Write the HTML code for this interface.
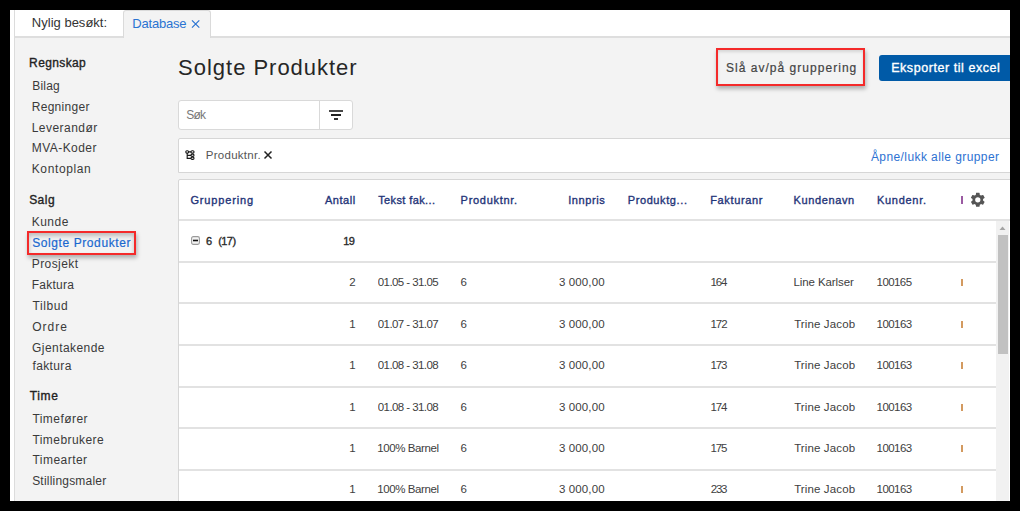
<!DOCTYPE html><html><head><meta charset="utf-8"><style>
*{margin:0;padding:0;box-sizing:border-box}
html,body{width:1020px;height:511px;overflow:hidden;background:#000}
body{position:relative;font-family:"Liberation Sans",sans-serif}
.a{position:absolute}
.t{position:absolute;white-space:nowrap}
</style></head><body><div class="a" style="left:10px;top:10px;width:1000px;height:491px;background:#fff"></div><div class="a" style="left:14px;top:10px;width:1px;height:491px;background:#dcdcdc"></div><div class="a" style="left:15px;top:38px;width:995px;height:463px;background:#f3f3f3"></div><div class="a" style="left:15px;top:36px;width:995px;height:2px;background:#dedede"></div><div class="a" style="left:123px;top:10px;width:88px;height:28px;background:#f3f3f3;border:1px solid #dadada;border-bottom:none;border-radius:3px 3px 0 0"></div><div class="a" style="left:27px;top:231px;width:109px;height:24px;border:2px solid #f42a2a;box-shadow:1px 3px 4px rgba(0,0,0,.28), inset 0 3px 4px rgba(0,0,0,.22)"></div><div class="a" style="left:716px;top:48px;width:149px;height:38px;border:2px solid #f42a2a;box-shadow:1px 3px 4px rgba(0,0,0,.28), inset 0 2px 3px rgba(0,0,0,.12)"></div><div class="a" style="left:879px;top:55px;width:140px;height:26px;background:#005aa7;border-radius:3px"></div><div class="a" style="left:178px;top:100px;width:175px;height:30px;background:#fff;border:1px solid #d9d9d9;border-radius:3px"></div><div class="a" style="left:319px;top:101px;width:1px;height:28px;background:#d9d9d9"></div><div class="a" style="left:329px;top:110px;width:14px;height:2px;background:#484848"></div><div class="a" style="left:331px;top:114px;width:10px;height:2px;background:#222"></div><div class="a" style="left:334px;top:118px;width:4px;height:2px;background:#333"></div><div class="a" style="left:178px;top:138px;width:840px;height:35px;background:#fff;border:1px solid #d6d6d6;border-radius:2px 2px 0 0"></div><div class="a" style="left:178px;top:179px;width:840px;height:330px;background:#fff;border:1px solid #d6d6d6;border-radius:2px"></div><div class="a" style="left:179px;top:219px;width:831px;height:2px;background:#e2e2e2"></div><div class="a" style="left:179px;top:261px;width:817px;height:2px;background:#e2e2e2"></div><div class="a" style="left:179px;top:302px;width:817px;height:2px;background:#e2e2e2"></div><div class="a" style="left:179px;top:344px;width:817px;height:2px;background:#e2e2e2"></div><div class="a" style="left:179px;top:386px;width:817px;height:2px;background:#e2e2e2"></div><div class="a" style="left:179px;top:427px;width:817px;height:2px;background:#e2e2e2"></div><div class="a" style="left:179px;top:469px;width:817px;height:2px;background:#e2e2e2"></div><div class="a" style="left:996px;top:221px;width:13px;height:280px;background:#f1f1f1"></div><div class="a" style="left:998px;top:235px;width:10px;height:119px;background:#c1c1c1"></div><svg class="a" style="left:996px;top:221px" width="13" height="14"><path d="M3.5 9 L6.5 5.5 L9.5 9 Z" fill="#a3a3a3"/></svg><svg class="a" style="left:191px;top:19px" width="10" height="10"><path d="M1 1.3 L8.3 8.6 M8.3 1.3 L1 8.6" stroke="#2a74d2" stroke-width="1.2"/></svg><svg class="a" style="left:263px;top:150px" width="10" height="10"><path d="M1.5 1.5 L8.5 8.5 M8.5 1.5 L1.5 8.5" stroke="#222" stroke-width="1.5"/></svg><svg class="a" style="left:185px;top:150px" width="10" height="10"><g fill="none" stroke="#1a1a1a" stroke-width="1.15"><rect x="0.8" y="0.7" width="2.8" height="2.4" rx="1.1"/><rect x="6" y="0.7" width="3" height="2.4" rx="1.1"/><rect x="6" y="4.1" width="3" height="2.3" rx="1.1"/><rect x="6" y="7.1" width="3" height="2.3" rx="1.1"/><path d="M3.6 1.9 H6 M2.2 3.1 V8.3 H6 M2.2 5.3 H6"/></g></svg><svg class="a" style="left:191px;top:236px" width="9" height="9"><rect x="0.6" y="0.6" width="7.8" height="7.8" rx="1.6" fill="#f4f4f4" stroke="#9a9a9a" stroke-width="1.1"/><rect x="2" y="3.7" width="5" height="1.6" fill="#111"/></svg><div class="a" style="left:961.2px;top:196px;width:1.6px;height:8px;background:#9a5aa2"></div><svg class="a" style="left:969px;top:190.8px" width="17.6" height="17.6" viewBox="0 0 24 24"><path fill="#555" d="M19.14 12.94c.04-.3.06-.61.06-.94 0-.32-.02-.64-.07-.94l2.03-1.58a.49.49 0 0 0 .12-.61l-1.92-3.32a.49.49 0 0 0-.59-.22l-2.39.96c-.5-.38-1.03-.7-1.62-.94l-.36-2.54a.48.48 0 0 0-.48-.41h-3.84c-.24 0-.43.17-.47.41l-.36 2.54c-.59.24-1.13.57-1.62.94l-2.39-.96a.48.48 0 0 0-.59.22L2.74 8.87c-.12.21-.08.47.12.61l2.03 1.58c-.05.3-.09.63-.09.94s.02.64.07.94l-2.03 1.58a.49.49 0 0 0-.12.61l1.92 3.32c.12.22.37.29.59.22l2.39-.96c.5.38 1.03.7 1.62.94l.36 2.54c.05.24.24.41.48.41h3.84c.24 0 .44-.17.47-.41l.36-2.54c.59-.24 1.13-.56 1.62-.94l2.39.96c.22.08.47 0 .59-.22l1.92-3.32c.12-.22.07-.47-.12-.61l-2.01-1.58zM12 15.6A3.6 3.6 0 1 1 12 8.4a3.6 3.6 0 0 1 0 7.2z"/></svg><div class="a" style="left:961px;top:279px;width:1.5px;height:7px;background:#d39a60"></div><div class="a" style="left:961px;top:321px;width:1.5px;height:7px;background:#d39a60"></div><div class="a" style="left:961px;top:362px;width:1.5px;height:7px;background:#d39a60"></div><div class="a" style="left:961px;top:404px;width:1.5px;height:7px;background:#d39a60"></div><div class="a" style="left:961px;top:445px;width:1.5px;height:7px;background:#d39a60"></div><div class="a" style="left:961px;top:486px;width:1.5px;height:7px;background:#d39a60"></div><div class="t" style="left:31.83px;top:16px;font-size:13px;line-height:13px;color:#333;letter-spacing:0.009px;">Nylig besøkt:</div><div class="t" style="left:132.33px;top:17px;font-size:13px;line-height:13px;color:#2a74d2;letter-spacing:-0.202px;">Database</div><div class="t" style="left:29.12px;top:57px;font-size:12px;line-height:12px;color:#222;-webkit-text-stroke:0.35px #222;letter-spacing:0.377px;">Regnskap</div><div class="t" style="left:32.22px;top:80px;font-size:12px;line-height:12px;color:#3a3a3a;letter-spacing:0.218px;">Bilag</div><div class="t" style="left:31.72px;top:101px;font-size:12px;line-height:12px;color:#3a3a3a;letter-spacing:0.289px;">Regninger</div><div class="t" style="left:31.72px;top:122px;font-size:12px;line-height:12px;color:#3a3a3a;letter-spacing:0.468px;">Leverandør</div><div class="t" style="left:31.72px;top:142px;font-size:12px;line-height:12px;color:#3a3a3a;letter-spacing:0.455px;">MVA-Koder</div><div class="t" style="left:31.72px;top:163px;font-size:12px;line-height:12px;color:#3a3a3a;letter-spacing:0.627px;">Kontoplan</div><div class="t" style="left:29.16px;top:194px;font-size:12px;line-height:12px;color:#222;-webkit-text-stroke:0.35px #222;letter-spacing:0.462px;">Salg</div><div class="t" style="left:31.72px;top:216px;font-size:12px;line-height:12px;color:#3a3a3a;letter-spacing:0.479px;">Kunde</div><div class="t" style="left:32.26px;top:237px;font-size:12px;line-height:12px;color:#1a68cf;letter-spacing:0.584px;-webkit-text-stroke:0.2px #1a68cf;">Solgte Produkter</div><div class="t" style="left:31.72px;top:258px;font-size:12px;line-height:12px;color:#3a3a3a;letter-spacing:0.430px;">Prosjekt</div><div class="t" style="left:31.72px;top:279px;font-size:12px;line-height:12px;color:#3a3a3a;letter-spacing:0.266px;">Faktura</div><div class="t" style="left:32.43px;top:300px;font-size:12px;line-height:12px;color:#3a3a3a;letter-spacing:0.619px;">Tilbud</div><div class="t" style="left:32.13px;top:321px;font-size:12px;line-height:12px;color:#3a3a3a;letter-spacing:1.004px;">Ordre</div><div class="t" style="left:32.10px;top:342px;font-size:12px;line-height:12px;color:#3a3a3a;letter-spacing:0.437px;">Gjentakende</div><div class="t" style="left:32.53px;top:360px;font-size:12px;line-height:12px;color:#3a3a3a;letter-spacing:0.364px;">faktura</div><div class="t" style="left:29.73px;top:390px;font-size:12px;line-height:12px;color:#222;-webkit-text-stroke:0.35px #222;letter-spacing:0.656px;">Time</div><div class="t" style="left:32.43px;top:413px;font-size:12px;line-height:12px;color:#3a3a3a;letter-spacing:0.451px;">Timefører</div><div class="t" style="left:32.43px;top:434px;font-size:12px;line-height:12px;color:#3a3a3a;letter-spacing:0.438px;">Timebrukere</div><div class="t" style="left:32.43px;top:454px;font-size:12px;line-height:12px;color:#3a3a3a;letter-spacing:0.470px;">Timearter</div><div class="t" style="left:32.16px;top:475px;font-size:12px;line-height:12px;color:#3a3a3a;letter-spacing:0.207px;">Stillingsmaler</div><div class="t" style="left:178.10px;top:57px;font-size:22px;line-height:22px;color:#262626;letter-spacing:0.979px;">Solgte Produkter</div><div class="t" style="left:725.96px;top:62px;font-size:12px;line-height:12px;color:#444;letter-spacing:1.030px;-webkit-text-stroke:0.2px #444;">Slå av/på gruppering</div><div class="t" style="left:891.17px;top:62px;font-size:12.5px;line-height:12.5px;color:#fff;-webkit-text-stroke:0.35px #fff;letter-spacing:0.561px;">Eksporter til excel</div><div class="t" style="left:186.36px;top:109px;font-size:12px;line-height:12px;color:#777;letter-spacing:-0.858px;">Søk</div><div class="t" style="left:205.76px;top:150px;font-size:11.5px;line-height:11.5px;color:#555;letter-spacing:0.275px;">Produktnr.</div><div class="t" style="left:870.88px;top:151px;font-size:12px;line-height:12px;color:#2d72d2;letter-spacing:0.414px;">Åpne/lukk alle grupper</div><div class="t" style="left:190.45px;top:195px;font-size:11px;line-height:11px;color:#1f3478;-webkit-text-stroke:0.35px #1f3478;letter-spacing:0.846px;">Gruppering</div><div class="t" style="left:324.98px;top:195px;font-size:11px;line-height:11px;color:#1f3478;-webkit-text-stroke:0.35px #1f3478;letter-spacing:0.525px;">Antall</div><div class="t" style="left:378.15px;top:195px;font-size:11px;line-height:11px;color:#1f3478;-webkit-text-stroke:0.35px #1f3478;letter-spacing:0.388px;">Tekst fak...</div><div class="t" style="left:460.60px;top:195px;font-size:11px;line-height:11px;color:#1f3478;-webkit-text-stroke:0.35px #1f3478;letter-spacing:0.707px;">Produktnr.</div><div class="t" style="left:568.18px;top:195px;font-size:11px;line-height:11px;color:#1f3478;-webkit-text-stroke:0.35px #1f3478;letter-spacing:0.597px;">Innpris</div><div class="t" style="left:627.70px;top:195px;font-size:11px;line-height:11px;color:#1f3478;-webkit-text-stroke:0.35px #1f3478;letter-spacing:0.610px;">Produktg...</div><div class="t" style="left:710.20px;top:195px;font-size:11px;line-height:11px;color:#1f3478;-webkit-text-stroke:0.35px #1f3478;letter-spacing:0.651px;">Fakturanr</div><div class="t" style="left:793.60px;top:195px;font-size:11px;line-height:11px;color:#1f3478;-webkit-text-stroke:0.35px #1f3478;letter-spacing:0.606px;">Kundenavn</div><div class="t" style="left:876.90px;top:195px;font-size:11px;line-height:11px;color:#1f3478;-webkit-text-stroke:0.35px #1f3478;letter-spacing:0.723px;">Kundenr.</div><div class="t" style="left:206.04px;top:236px;font-size:11px;line-height:11px;color:#2a2a2a;-webkit-text-stroke:0.35px #2a2a2a;">6</div><div class="t" style="left:218.22px;top:236px;font-size:11px;line-height:11px;color:#2a2a2a;-webkit-text-stroke:0.35px #2a2a2a;letter-spacing:-0.566px;">(17)</div><div class="t" style="left:343.36px;top:236px;font-size:11px;line-height:11px;color:#2a2a2a;-webkit-text-stroke:0.35px #2a2a2a;letter-spacing:-0.691px;">19</div><div class="t" style="left:349.17px;top:277px;font-size:11.5px;line-height:11.5px;color:#404040;">2</div><div class="t" style="left:377.75px;top:277px;font-size:11.5px;line-height:11.5px;color:#404040;letter-spacing:-0.571px;width:60.85px;overflow:hidden;">01.05 - 31.05</div><div class="t" style="left:460.62px;top:277px;font-size:11.5px;line-height:11.5px;color:#404040;">6</div><div class="t" style="left:558.96px;top:277px;font-size:11.5px;line-height:11.5px;color:#404040;letter-spacing:0.117px;">3 000,00</div><div class="t" style="left:710.42px;top:277px;font-size:11.5px;line-height:11.5px;color:#404040;letter-spacing:-1.137px;">164</div><div class="t" style="left:793.46px;top:277px;font-size:11.5px;line-height:11.5px;color:#404040;letter-spacing:-0.095px;">Line Karlser</div><div class="t" style="left:876.62px;top:277px;font-size:11.5px;line-height:11.5px;color:#404040;letter-spacing:-0.583px;">100165</div><div class="t" style="left:349.16px;top:319px;font-size:11.5px;line-height:11.5px;color:#404040;">1</div><div class="t" style="left:377.75px;top:319px;font-size:11.5px;line-height:11.5px;color:#404040;letter-spacing:-0.571px;width:60.85px;overflow:hidden;">01.07 - 31.07</div><div class="t" style="left:460.62px;top:319px;font-size:11.5px;line-height:11.5px;color:#404040;">6</div><div class="t" style="left:558.96px;top:319px;font-size:11.5px;line-height:11.5px;color:#404040;letter-spacing:0.117px;">3 000,00</div><div class="t" style="left:710.42px;top:319px;font-size:11.5px;line-height:11.5px;color:#404040;letter-spacing:-1.017px;">172</div><div class="t" style="left:794.14px;top:319px;font-size:11.5px;line-height:11.5px;color:#404040;letter-spacing:0.128px;">Trine Jacob</div><div class="t" style="left:876.62px;top:319px;font-size:11.5px;line-height:11.5px;color:#404040;letter-spacing:-0.579px;">100163</div><div class="t" style="left:349.16px;top:360px;font-size:11.5px;line-height:11.5px;color:#404040;">1</div><div class="t" style="left:377.75px;top:360px;font-size:11.5px;line-height:11.5px;color:#404040;letter-spacing:-0.571px;width:60.85px;overflow:hidden;">01.08 - 31.08</div><div class="t" style="left:460.62px;top:360px;font-size:11.5px;line-height:11.5px;color:#404040;">6</div><div class="t" style="left:558.96px;top:360px;font-size:11.5px;line-height:11.5px;color:#404040;letter-spacing:0.117px;">3 000,00</div><div class="t" style="left:710.42px;top:360px;font-size:11.5px;line-height:11.5px;color:#404040;letter-spacing:-1.053px;">173</div><div class="t" style="left:794.14px;top:360px;font-size:11.5px;line-height:11.5px;color:#404040;letter-spacing:0.128px;">Trine Jacob</div><div class="t" style="left:876.62px;top:360px;font-size:11.5px;line-height:11.5px;color:#404040;letter-spacing:-0.579px;">100163</div><div class="t" style="left:349.16px;top:402px;font-size:11.5px;line-height:11.5px;color:#404040;">1</div><div class="t" style="left:377.75px;top:402px;font-size:11.5px;line-height:11.5px;color:#404040;letter-spacing:-0.571px;width:60.85px;overflow:hidden;">01.08 - 31.08</div><div class="t" style="left:460.62px;top:402px;font-size:11.5px;line-height:11.5px;color:#404040;">6</div><div class="t" style="left:558.96px;top:402px;font-size:11.5px;line-height:11.5px;color:#404040;letter-spacing:0.117px;">3 000,00</div><div class="t" style="left:710.42px;top:402px;font-size:11.5px;line-height:11.5px;color:#404040;letter-spacing:-1.137px;">174</div><div class="t" style="left:794.14px;top:402px;font-size:11.5px;line-height:11.5px;color:#404040;letter-spacing:0.128px;">Trine Jacob</div><div class="t" style="left:876.62px;top:402px;font-size:11.5px;line-height:11.5px;color:#404040;letter-spacing:-0.579px;">100163</div><div class="t" style="left:349.16px;top:443px;font-size:11.5px;line-height:11.5px;color:#404040;">1</div><div class="t" style="left:377.32px;top:443px;font-size:11.5px;line-height:11.5px;color:#404040;letter-spacing:-0.421px;width:61.28px;overflow:hidden;">100% Barnel</div><div class="t" style="left:460.62px;top:443px;font-size:11.5px;line-height:11.5px;color:#404040;">6</div><div class="t" style="left:558.96px;top:443px;font-size:11.5px;line-height:11.5px;color:#404040;letter-spacing:0.117px;">3 000,00</div><div class="t" style="left:710.42px;top:443px;font-size:11.5px;line-height:11.5px;color:#404040;letter-spacing:-1.064px;">175</div><div class="t" style="left:794.14px;top:443px;font-size:11.5px;line-height:11.5px;color:#404040;letter-spacing:0.128px;">Trine Jacob</div><div class="t" style="left:876.62px;top:443px;font-size:11.5px;line-height:11.5px;color:#404040;letter-spacing:-0.579px;">100163</div><div class="t" style="left:349.16px;top:484px;font-size:11.5px;line-height:11.5px;color:#404040;">1</div><div class="t" style="left:377.32px;top:484px;font-size:11.5px;line-height:11.5px;color:#404040;letter-spacing:-0.421px;width:61.28px;overflow:hidden;">100% Barnel</div><div class="t" style="left:460.62px;top:484px;font-size:11.5px;line-height:11.5px;color:#404040;">6</div><div class="t" style="left:558.96px;top:484px;font-size:11.5px;line-height:11.5px;color:#404040;letter-spacing:0.117px;">3 000,00</div><div class="t" style="left:710.72px;top:484px;font-size:11.5px;line-height:11.5px;color:#404040;letter-spacing:-1.202px;">233</div><div class="t" style="left:794.14px;top:484px;font-size:11.5px;line-height:11.5px;color:#404040;letter-spacing:0.128px;">Trine Jacob</div><div class="t" style="left:876.62px;top:484px;font-size:11.5px;line-height:11.5px;color:#404040;letter-spacing:-0.579px;">100163</div><div class="a" style="left:0;top:0;width:1020px;height:10px;background:#000"></div><div class="a" style="left:0;top:501px;width:1020px;height:10px;background:#000"></div><div class="a" style="left:0;top:0;width:10px;height:511px;background:#000"></div><div class="a" style="left:1010px;top:0;width:10px;height:511px;background:#000"></div></body></html>
